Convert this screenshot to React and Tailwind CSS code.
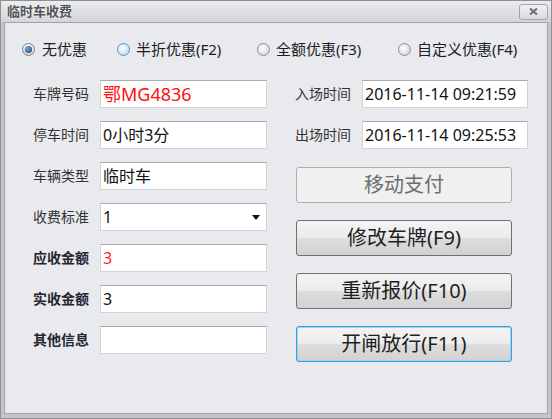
const font = { fontFamily: '"Noto Sans", "Noto Sans CJK SC", sans-serif' };

function Radio({ checked, hover }) {
  if (checked) {
    return (
      <span className="w-[13px] h-[13px] rounded-full border border-[#7b7d83] bg-gradient-to-b from-[#f4f4f4] to-[#d0d2d6] flex items-center justify-center">
        <span className="w-[7px] h-[7px] rounded-full bg-[radial-gradient(circle_at_35%_35%,#6fa6d8,#1d3f70)]" />
      </span>
    );
  }
  if (hover) {
    return (
      <span className="w-[13px] h-[13px] rounded-full border border-[#5b8fc4] bg-[radial-gradient(circle_at_40%_40%,#ffffff,#a9d3f2)]" />
    );
  }
  return (
    <span className="w-[13px] h-[13px] rounded-full border border-[#8e9095] bg-[radial-gradient(circle_at_40%_40%,#ffffff,#c9cbcf)]" />
  );
}

function Field({ label, bold, children, select }) {
  return (
    <div className="flex items-center h-[28px]">
      <span className={`w-[67px] text-[14px] leading-none ${bold ? "font-bold text-[#222631]" : "text-[#333]"}`}>
        {label}
      </span>
      <div className="flex-1 h-[28px] bg-white border border-[#d3d4d8] border-t-[#a9aaae] flex items-center pl-[2px] pr-[6px]">
        <div className="flex-1 leading-none">{children}</div>
        {select && (
          <svg width="8" height="5" viewBox="0 0 8 5">
            <path d="M0 0h8L4 5z" fill="#111" />
          </svg>
        )}
      </div>
    </div>
  );
}

function Btn({ children, disabled, focused }) {
  return (
    <div
      className={`h-[36px] w-[216px] rounded-[3px] border flex items-center justify-center text-[20px] leading-none ${
        focused ? "border-[#3c9ed8] shadow-[inset_0_0_0_1px_#9fd3f2]" : disabled ? "border-[#adadad]" : "border-[#707070]"
      } ${disabled ? "text-[#6e6e6e] bg-[#f0f0f0]" : "text-[#1e1e1e] bg-[linear-gradient(#f3f3f3,#ececec_48%,#dddddd_52%,#d2d2d2)]"}`}
    >
      {children}
    </div>
  );
}

export default function App() {
  return (
    <div style={font} className="w-[552px] h-[419px] bg-[#c4c5ca] border border-[#8f9095] flex flex-col">
      {/* title bar */}
      <div className="h-[21px] flex items-center justify-between pl-[6px] pr-[3px] bg-gradient-to-b from-[#ebecef] to-[#d4d5d9]">
        <span className="text-[13px] font-bold text-[#525257] leading-none [text-shadow:0_0_2px_#fff]">临时车收费</span>
        <div className="w-[29px] h-[16px] rounded-[3px] border border-[#a3a4a9] bg-gradient-to-b from-[#f1f1f3] to-[#d9dadd] flex items-center justify-center">
          <svg width="9" height="7" viewBox="0 0 9 7">
            <path d="M1 0.5L8 6.5M8 0.5L1 6.5" stroke="#6d6e73" strokeWidth="2" />
          </svg>
        </div>
      </div>

      {/* body */}
      <div className="flex-1 mx-[3px] mb-[4px] bg-[#e9eaee] border border-[#a1a2a7] flex flex-col">
        {/* radios */}
        <div className="flex items-center h-[20px] mt-[16px] pl-[17px] text-[15px] text-[#1e1e1e] leading-none">
          <div className="flex items-center gap-[7px] w-[95px]">
            <Radio checked />
            <span>无优惠</span>
          </div>
          <div className="flex items-center gap-[6px] w-[140px]">
            <Radio hover />
            <span>半折优惠(F2)</span>
          </div>
          <div className="flex items-center gap-[6px] w-[141px]">
            <Radio />
            <span>全额优惠(F3)</span>
          </div>
          <div className="flex items-center gap-[6px]">
            <Radio />
            <span>自定义优惠(F4)</span>
          </div>
        </div>

        <div className="flex mt-[21px] pl-[28px]">
          {/* left column */}
          <div className="w-[234px] flex flex-col gap-[13px]">
            <Field label="车牌号码">
              <span className="text-[18px] text-[#ff1010]">鄂MG4836</span>
            </Field>
            <Field label="停车时间">
              <span className="text-[16px] text-[#111]">0小时3分</span>
            </Field>
            <Field label="车辆类型">
              <span className="text-[16px] text-[#111]">临时车</span>
            </Field>
            <Field label="收费标准" select>
              <span className="text-[16px] text-[#111]">1</span>
            </Field>
            <Field label="应收金额" bold>
              <span className="text-[16px] text-[#ff1a1a]">3</span>
            </Field>
            <Field label="实收金额" bold>
              <span className="text-[16px] text-[#111]">3</span>
            </Field>
            <Field label="其他信息" bold />
          </div>

          {/* right column */}
          <div className="ml-[28px] w-[233px] flex flex-col">
            <div className="flex flex-col gap-[13px]">
              <Field label="入场时间">
                <span className="text-[16px] text-[#111]">2016-11-14 09:21:59</span>
              </Field>
              <Field label="出场时间">
                <span className="text-[16px] text-[#111]">2016-11-14 09:25:53</span>
              </Field>
            </div>
            <div className="mt-[18px] ml-[1px] flex flex-col gap-[17px]">
              <Btn disabled>移动支付</Btn>
              <Btn>修改车牌(F9)</Btn>
              <Btn>重新报价(F10)</Btn>
              <Btn focused>开闸放行(F11)</Btn>
            </div>
          </div>
        </div>
      </div>
    </div>
  );
}
